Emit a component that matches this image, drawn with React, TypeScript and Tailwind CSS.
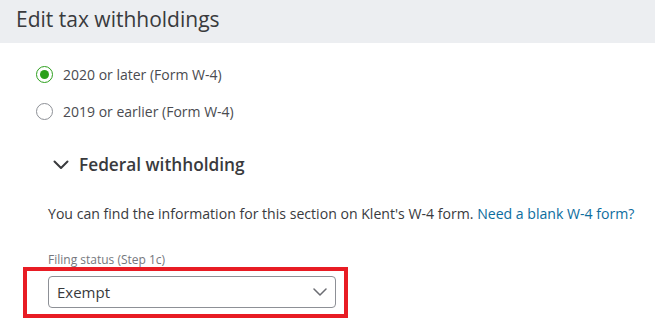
import React from "react";

export default function App() {
  return (
    <div className="w-[655px] h-[322px] bg-white overflow-hidden" style={{ fontFamily: '"Open Sans", sans-serif' }}>
      <div className="h-[43px] bg-[#eceef1] pl-[16px] pt-[5px]">
        <h1 className="text-[21px] leading-[29px] text-[#393a3d]">Edit tax withholdings</h1>
      </div>
      <div className="pl-[36px] pt-[22px]">
        <div className="flex flex-col gap-[19px]">
          <label className="flex items-center gap-[10px] h-[18px]">
            <span className="w-[17px] h-[17px] rounded-full border-[1.5px] border-[#2ca01c] flex items-center justify-center">
              <span className="w-[9px] h-[9px] rounded-full bg-[#2ca01c]" />
            </span>
            <span className="text-[14px] text-[#4a4b50]">2020 or later (Form W-4)</span>
          </label>
          <label className="flex items-center gap-[10px] h-[18px]">
            <span className="w-[17px] h-[17px] rounded-full border border-[#8d9096]" />
            <span className="text-[14px] text-[#4a4b50]">2019 or earlier (Form W-4)</span>
          </label>
        </div>
      </div>
      <div className="pl-[53px] pt-[32px] flex items-center gap-[10px]">
        <svg width="16" height="10" viewBox="0 0 16 10" fill="none">
          <path d="M1.5 1.5 L8 8 L14.5 1.5" stroke="#393a3d" strokeWidth="2" strokeLinecap="round" strokeLinejoin="round" />
        </svg>
        <span className="text-[17.25px] font-semibold text-[#393a3d]">Federal withholding</span>
      </div>
      <p className="pl-[48px] pt-[25px] text-[14.1px] text-[#393a3d]">
        You can find the information for this section on Klent's W-4 form.{" "}
        <a className="text-[#0d6d9e]">Need a blank W-4 form?</a>
      </p>
      <div className="ml-[23px] mt-[28px] w-[325px]">
        <div className="pl-[25px] text-[12px] text-[#75777d] leading-[16px] mb-[-1px]">Filing status (Step 1c)</div>
        <div className="border-[4px] border-[#e81c24] pl-[21px] pr-[8px] pt-[5px] pb-[6px]">
          <div className="h-[32px] border border-[#8d9096] rounded-[4px] flex items-center justify-between pl-[8px] pr-[8px]">
            <span className="text-[15px] text-[#393a3d]">Exempt</span>
            <svg width="14" height="8" viewBox="0 0 14 8" fill="none">
              <path d="M1 1 L7 7 L13 1" stroke="#6b6c72" strokeWidth="1.5" strokeLinecap="round" strokeLinejoin="round" />
            </svg>
          </div>
        </div>
      </div>
    </div>
  );
}
